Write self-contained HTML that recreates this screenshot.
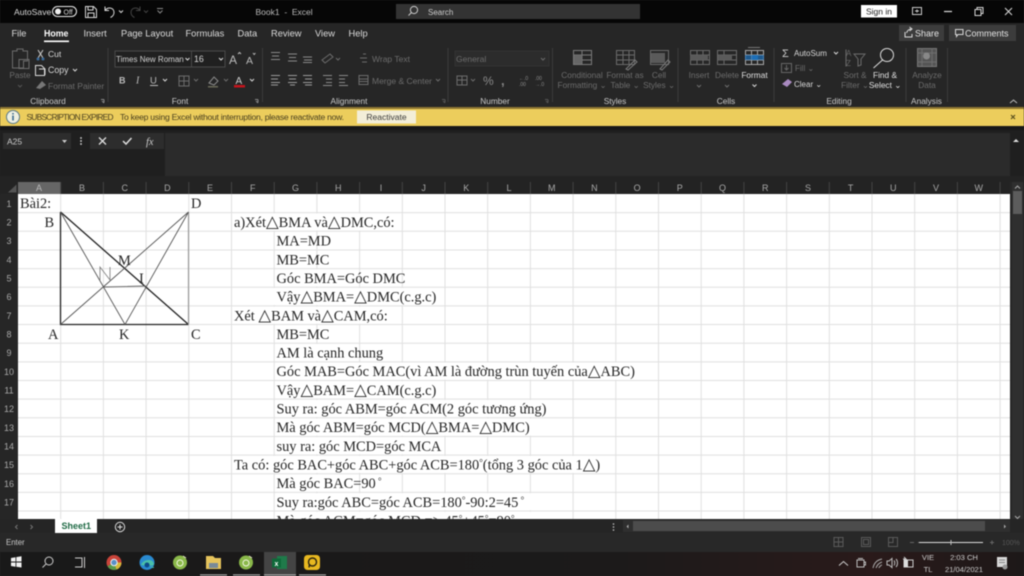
<!DOCTYPE html>
<html><head><meta charset="utf-8"><style>
html,body{margin:0;padding:0;background:#262626;width:1024px;height:576px;overflow:hidden}
svg{display:block;filter:blur(.45px)}
text{font-family:"Liberation Sans",sans-serif;font-size:9px;fill:#d8d8d8;white-space:pre}
.d{fill:#6c6c6c}
.t{font-size:9.3px;fill:#dcdcdc}
.g{font-size:8.3px;fill:#c8c8c8;text-anchor:middle}
.r{font-size:8.3px;fill:#6c6c6c;text-anchor:middle}
.w{font-size:8.3px;fill:#e0e0e0;text-anchor:middle}
.h{font-size:9px;fill:#a8a8a8;text-anchor:middle}
.s{font-family:"Liberation Serif",serif;font-size:14.4px;fill:#262626}
.tr{font-family:"DejaVu Sans",sans-serif;font-size:16.5px}
.y{font-size:8.6px;fill:#4a4020}
.ic{fill:none;stroke:#6c6c6c;stroke-width:1}
.iw{fill:none;stroke:#d8d8d8;stroke-width:1}
</style></head><body>
<svg width="1024" height="576" viewBox="0 0 1024 576" xmlns="http://www.w3.org/2000/svg">
<!-- title bar -->
<rect width="1024" height="23" fill="#060606"/>
<text x="14" y="15" style="font-size:8.6px">AutoSave</text>
<rect x="52.5" y="6.5" width="24" height="10" rx="5" fill="none" stroke="#eee"/>
<circle cx="58" cy="11.5" r="3" fill="#eee"/>
<text x="63.5" y="14.5" style="font-size:7px">Off</text>
<path class="iw" d="M85.500 6.500h8l3 3v8h-11zM88 6.500v3.500h5v-3.500M88 17.500v-4.500h6v4.500"/>
<path class="iw" d="M105 6.500v4h4M105 10.500c3-4 9-3 9 2 0 2-1.500 4-3.500 5"/>
<path class="iw" d="M119 10.500l2 2 2-2"/>
<path d="M140 6.500v4h-4M140 10.500c-3-4-9-3-9 2 0 2 1.500 4 3.500 5" fill="none" stroke="#444"/>
<path d="M144 10.500l2 2 2-2" fill="none" stroke="#444"/>
<path d="M157 8.500h6M157.500 10.500l2.500 2.500 2.500-2.500" fill="none" stroke="#888"/>
<text x="255.500" y="15" style="font-size:8.500px;fill:#bbb">Book1  -  Excel</text>
<rect x="396" y="4" width="244" height="15" fill="#333"/>
<circle cx="414" cy="10" r="3.600" fill="none" stroke="#ccc"/><path d="M411.500 12.500l-3 3" stroke="#ccc" fill="none"/>
<text x="428" y="15" style="font-size:8px;fill:#ccc">Search</text>
<rect x="861" y="5" width="36" height="12.500" fill="#fff"/>
<text x="879" y="14.500" style="font-size:8.500px;fill:#222;text-anchor:middle">Sign in</text>
<rect x="912.500" y="7.500" width="9" height="7" fill="none" stroke="#ccc"/><path d="M915 11h4M917 9.500v3" stroke="#ccc"/>
<path d="M944 11.500h8" stroke="#ddd" stroke-width="1.200"/>
<path class="iw" d="M975 9.500h6v6h-6zM977 9.500v-2h6v6h-2"/>
<path class="iw" d="M1005 8l7 7M1012 8l-7 7"/>
<!-- tabs -->
<rect y="23" width="1024" height="84" fill="#262626"/>
<text class="t" x="11.500" y="36.500">File</text>
<text class="t" x="44" y="36.500" style="fill:#fff;font-weight:bold;font-size:8.800px">Home</text>
<rect x="44" y="40.500" width="25" height="1.600" fill="#fff"/>
<text class="t" x="83.500" y="36.500">Insert</text>
<text class="t" x="121" y="36.500">Page Layout</text>
<text class="t" x="185.500" y="36.500">Formulas</text>
<text class="t" x="237.500" y="36.500">Data</text>
<text class="t" x="271" y="36.500">Review</text>
<text class="t" x="315" y="36.500">View</text>
<text class="t" x="348.500" y="36.500">Help</text>
<rect x="899" y="25" width="45" height="16" fill="#3c3c3c"/>
<path class="iw" d="M905 32v5h7v-3M906.500 33c1-3 3-4 5-4M909.500 27l2.500 2-2.500 2"/>
<text x="915" y="36.500" style="font-size:9px;fill:#e4e4e4">Share</text>
<rect x="949" y="25" width="67" height="16" fill="#3c3c3c"/>
<path class="iw" d="M955.500 29.500h7.500v5h-5l-1.500 2v-2h-1z"/>
<text x="965" y="36.500" style="font-size:9px;fill:#e4e4e4">Comments</text>
<!-- separators -->
<path d="M108 48v54M262.500 48v54M448 48v54M552.500 48v54M678 48v54M774 48v54M906 48v54M947.500 48v54" stroke="#3a3a3a"/>
<!-- clipboard -->
<path class="ic" d="M12.500 51h4.500v-2h6v2h4.500v10h-4v7h-11zM19 59.500h10v9h-10z"/>
<text class="r" x="20" y="78">Paste</text>
<path d="M18 85l2 2 2-2" stroke="#555" fill="none"/>
<path d="M38 50l5 8M43 50l-5 8" stroke="#ccc" fill="none"/><circle cx="38" cy="59" r="1.500" fill="#3a6a9a"/><circle cx="43" cy="59" r="1.500" fill="#3a6a9a"/>
<text x="48" y="57" style="font-size:8.500px">Cut</text>
<path class="iw" d="M35.500 65.500h6l3 3v7h-9zM39 69h6v6"/>
<text x="48" y="73" style="font-size:8.800px">Copy</text>
<path class="iw" d="M73 69l2 2 2-2"/>
<path d="M36 88l6-7 4 4-6 4z" fill="#777"/>
<text class="d" x="48" y="89" style="font-size:8.500px">Format Painter</text>
<text class="g" x="48" y="104">Clipboard</text>
<path d="M101 99.500h3M104 99.500v3M102 101l2 2" stroke="#888" fill="none"/>
<!-- font -->
<rect x="115" y="51" width="110" height="16" fill="#202020" stroke="#4a4a4a"/>
<path d="M191.500 51v16" stroke="#4a4a4a"/>
<text x="116" y="62" style="font-size:8px;fill:#d0d0d0">Times New Roman</text>
<path class="iw" d="M185.500 58l2 2 2-2M219 58l2 2 2-2"/>
<text x="194" y="62" style="font-size:8.800px">16</text>
<text x="229" y="64" style="font-size:12px;fill:#bbb">A</text><path d="M238 54l1.500-1.500 1.500 1.500" stroke="#bbb" fill="none"/>
<text x="246" y="64" style="font-size:10.500px;fill:#bbb">A</text><path d="M253 53l1.200 1.500 1.200-1.500" stroke="#bbb" fill="none"/>
<text x="119" y="83.500" style="font-size:9px;font-weight:bold;fill:#bbb">B</text>
<text x="136" y="83.500" style="font-family:'Liberation Serif';font-style:italic;font-size:10px;fill:#bbb">I</text>
<text x="150" y="83.500" style="font-size:9.500px;fill:#bbb">U</text><path d="M150 85.500h8" stroke="#bbb"/>
<path class="iw" d="M163 79l2 2 2-2"/>
<path class="ic" d="M179 76h10v10h-10zM184 76v10M179 81h10"/>
<path class="ic" d="M194 79l2 2 2-2"/>
<path d="M209 83l5-6 4 4-4 4z" fill="none" stroke="#8a8a8a"/><rect x="208" y="86" width="10" height="1.500" fill="#6a6a58"/>
<path class="ic" d="M224 79l2 2 2-2"/>
<text x="235.500" y="84" style="font-size:10px;fill:#ccc">A</text><rect x="234" y="85" width="11" height="2.500" fill="#c4141c"/>
<path class="iw" d="M250 79l2 2 2-2"/>
<text class="g" x="180" y="104">Font</text>
<path d="M255 99.500h3M258 99.500v3M256 101l2 2" stroke="#888" fill="none"/>
<!-- alignment -->
<path d="M271 52.500h9M272 56h7M271 59.500h9M288 54h9M289 57.500h7M288 61h9M303 57h9M304 60h8M303 62.500h9" stroke="#8a8a8a" fill="none"/>
<path class="ic" d="M322 60l8-6 3 3-8 6zM336 58l2 2 2-2"/><path class="ic" d="M363 54h3M360 58h7M362 62h5"/>
<text class="d" x="372" y="62" style="font-size:8.500px">Wrap Text</text>
<path d="M271 75.500h9M271 79h7M271 82.500h9M271 85h7M288 75.500h9M289 79h7M288 82.500h9M290 85h5M303 75.500h9M305 79h7M303 82.500h9M305 85h7" stroke="#9a9a9a" fill="none"/>
<path d="M323 75.500h9M326 79h6M326 82.500h6M323 85.500h9M339 75.500h9M339 79h6M339 82.500h6M339 85.500h9" stroke="#8a8a8a" fill="none"/>
<path class="ic" d="M359 75.500h9v9h-9zM359 79h9M359 81.500h9"/>
<text class="d" x="372" y="84" style="font-size:8.500px">Merge &amp; Center</text>
<path class="ic" d="M436 79l2 2 2-2"/>
<text class="g" x="349" y="104">Alignment</text>
<path d="M442 99.500h3M445 99.500v3M443 101l2 2" stroke="#555" fill="none"/>
<!-- number -->
<rect x="455" y="51" width="94" height="15" fill="#2c2c2c" stroke="#333"/>
<text class="d" x="456" y="62" style="font-size:8.500px">General</text>
<path class="ic" d="M541 58l2 2 2-2"/>
<path class="ic" d="M457 76h10v9h-10zM457 80h10M462 76v9"/><path class="ic" d="M471 79l2 2 2-2"/>
<text x="483" y="85" style="font-size:12px;fill:#8a8a8a">%</text>
<text x="501" y="85" style="font-size:13px;fill:#8a8a8a;font-weight:bold">,</text>
<text x="519" y="80" style="font-size:5px;fill:#8a8a8a">←.0</text><text x="519" y="86" style="font-size:5px;fill:#8a8a8a">.00</text>
<text x="535" y="80" style="font-size:5px;fill:#8a8a8a">.00</text><text x="535" y="86" style="font-size:5px;fill:#8a8a8a">→.0</text>
<text class="g" x="495" y="104">Number</text>
<path d="M545 99.500h3M548 99.500v3M546 101l2 2" stroke="#555" fill="none"/>
<!-- styles -->
<path d="M573.500 50.500h18v14h-18zM573.500 55h18M573.500 60h18M582 50.500v14" fill="none" stroke="#7a7a7a"/><rect x="574" y="55" width="8" height="9" fill="#666"/>
<text class="r" x="582" y="78">Conditional</text><text class="r" x="582" y="88">Formatting ⌄</text>
<path d="M616.500 50.500h18v14h-18zM616.500 55h18M616.500 60h18M623 50.500v14M629 50.500v14" fill="none" stroke="#6a6a6a"/><path d="M626 69l9-9 2 2-9 8z" fill="none" stroke="#7a7a7a"/>
<text class="r" x="625" y="78">Format as</text><text class="r" x="625" y="88">Table ⌄</text>
<path d="M650.500 50.500h18v14h-18z" fill="none" stroke="#6a6a6a"/><rect x="651" y="53" width="14" height="10" fill="#5a5a5a"/><path d="M660 69l8-9 2 2-8 8z" fill="none" stroke="#7a7a7a"/>
<text class="r" x="659" y="78">Cell</text><text class="r" x="659" y="88">Styles ⌄</text>
<text class="g" x="615" y="104">Styles</text>
<!-- cells -->
<path d="M690.500 50.500h19v14h-19zM690.500 55h19M690.500 60h19M697 50.500v14M703 50.500v14" fill="none" stroke="#6a6a6a"/><rect x="690" y="55" width="18" height="5" fill="#5a5a5a"/>
<text class="r" x="699" y="78">Insert</text><path class="ic" d="M697 85l2 2 2-2"/>
<path d="M717.500 50.500h19v14h-19zM717.500 55h19M717.500 60h19M724 50.500v14" fill="none" stroke="#6a6a6a"/><rect x="718" y="55" width="14" height="5" fill="#5a5a5a"/>
<text class="r" x="727" y="78">Delete</text><path class="ic" d="M725 85l2 2 2-2"/>
<path d="M745.500 50.500h18v14h-18zM745.500 55h18M745.500 60h18M751.500 50.500v14M757.500 50.500v14" fill="none" stroke="#a8a8a8"/><rect x="745" y="55" width="19" height="5" fill="#1d6fb8" opacity=".7"/><rect x="752" y="55" width="6" height="5" fill="#1d6fb8"/>
<path d="M748 47.500h12" stroke="#777"/>
<text class="w" x="754.500" y="78">Format</text><path class="iw" d="M752.500 84.500l2 2 2-2"/>
<text class="g" x="726" y="104">Cells</text>
<!-- editing -->
<text x="782" y="57" style="font-size:11px;fill:#ccc">Σ</text>
<text x="794" y="56" style="font-size:8px">AutoSum</text>
<path class="iw" d="M834 52l2 2 2-2"/>
<rect x="781.500" y="63.500" width="10" height="9" fill="none" stroke="#666"/><path d="M786.500 65v5M784.500 68l2 2 2-2" stroke="#666" fill="none"/>
<text class="d" x="795" y="71" style="font-size:8px">Fill ⌄</text>
<path d="M782 84l6-5 4 3-5 5z" fill="#a98ac0"/>
<text x="794" y="87" style="font-size:8px">Clear ⌄</text>
<text x="846" y="56" style="font-size:8px;fill:#666">A</text><text x="846" y="66" style="font-size:8px;fill:#666">Z</text>
<path d="M846 49.500v17M854 54h11l-4 5v6l-3 1v-7z" fill="none" stroke="#6c6c6c"/>
<text class="r" x="855" y="78">Sort &amp;</text><text class="r" x="855" y="88">Filter ⌄</text>
<circle cx="887" cy="55" r="6.500" fill="none" stroke="#ddd"/><path d="M882.500 60l-9 8" stroke="#ddd" fill="none"/>
<text class="w" x="885" y="78">Find &amp;</text><text class="w" x="885" y="88">Select ⌄</text>
<text class="g" x="839" y="104">Editing</text>
<!-- analysis -->
<rect x="917.500" y="48.500" width="19" height="18" fill="#555" stroke="#777"/><path d="M917 53h19M917 62h19M922 48v18M932 48v18" stroke="#6e6e6e"/><circle cx="926.500" cy="56" r="3.500" fill="#888"/>
<text class="r" x="927" y="78">Analyze</text><text class="r" x="927" y="88">Data</text>
<text class="g" x="926.500" y="104">Analysis</text>
<path d="M1010 103l3.500-3 3.500 3" stroke="#bbb" fill="none"/>
<!-- yellow bar -->
<rect y="107" width="1024" height="2" fill="#8d7632"/>
<rect y="109" width="1024" height="17" fill="#eccd5c"/>
<rect y="126" width="1024" height="4" fill="#171717"/>
<circle cx="13" cy="117" r="6.500" fill="#eef0e2" stroke="#5a7a8a"/>
<rect x="12.200" y="115.500" width="1.600" height="5" fill="#3a6a90"/><rect x="12.200" y="113" width="1.600" height="1.500" fill="#3a6a90"/>
<text class="y" x="26.500" y="120" style="font-size:8.400px;fill:#4a4020" textLength="87">SUBSCRIPTION EXPIRED</text>
<text class="y" x="120" y="120" textLength="224">To keep using Excel without interruption, please reactivate now.</text>
<rect x="357" y="110.500" width="59" height="13" fill="#f3eed8"/>
<text x="386.500" y="120" style="font-size:8.500px;fill:#3a3a3a;text-anchor:middle">Reactivate</text>
<path d="M1011 115l4 4M1015 115l-4 4" stroke="#5a5020" stroke-width="1.200"/>
<!-- formula bar -->
<rect y="130" width="1024" height="52" fill="#1f1f1f"/>
<rect x="3" y="133" width="68" height="16" fill="#2d2d2d"/>
<text x="7" y="144.500" style="font-size:8.500px;fill:#ccc">A25</text>
<path d="M62 140l2.500 3 2.500-3z" fill="#ccc"/>
<circle cx="81" cy="138" r=".9" fill="#ddd"/><circle cx="81" cy="141" r=".9" fill="#ddd"/><circle cx="81" cy="144" r=".9" fill="#ddd"/>
<rect x="90" y="133" width="74" height="16" fill="#2d2d2d"/>
<path d="M99 137.500l7 7M106 137.500l-7 7" stroke="#ddd" stroke-width="1.300" fill="none"/>
<path d="M123 141l3 3 5.500-6" stroke="#ddd" stroke-width="1.500" fill="none"/>
<text x="146" y="145" style="font-family:'Liberation Serif';font-style:italic;font-size:10.500px;fill:#ccc">fx</text>
<rect x="165" y="133" width="845" height="43" fill="#2b2b2b"/>
<path d="M1013 142l3-3 3 3z" fill="#ddd"/>
<!-- headers -->
<rect y="176" width="1024" height="18" fill="#232323"/>
<rect y="194" width="18" height="325" fill="#262626"/>
<path d="M8 192.500h8.500v-8z" fill="#555"/>
<rect x="18" y="182" width="42.500" height="12" fill="#666"/>
<path d="M60.700 182v12M103.400 182v12M146.100 182v12M188.800 182v12M231.500 182v12M274.200 182v12M316.900 182v12M359.600 182v12M402.300 182v12M445 182v12M487.700 182v12M530.400 182v12M573.100 182v12M615.800 182v12M658.500 182v12M701.200 182v12M743.900 182v12M786.600 182v12M829.300 182v12M872 182v12M914.700 182v12M957.400 182v12M1000.100 182v12" stroke="#444"/>
<text class="h" x="39" y="191" style="fill:#bbb">A</text><text class="h" x="82" y="191">B</text><text class="h" x="124.700" y="191">C</text><text class="h" x="167.400" y="191">D</text><text class="h" x="210" y="191">E</text><text class="h" x="252.800" y="191">F</text><text class="h" x="295.500" y="191">G</text><text class="h" x="338.200" y="191">H</text><text class="h" x="381" y="191">I</text><text class="h" x="423.600" y="191">J</text><text class="h" x="466.300" y="191">K</text><text class="h" x="509" y="191">L</text><text class="h" x="551.700" y="191">M</text><text class="h" x="594.400" y="191">N</text><text class="h" x="637.100" y="191">O</text><text class="h" x="679.800" y="191">P</text><text class="h" x="722.500" y="191">Q</text><text class="h" x="765.200" y="191">R</text><text class="h" x="808" y="191">S</text><text class="h" x="850.600" y="191">T</text><text class="h" x="893.300" y="191">U</text><text class="h" x="936" y="191">V</text><text class="h" x="978.700" y="191">W</text>
<text class="h" x="9" y="207">1</text><text class="h" x="9" y="225.500">2</text><text class="h" x="9" y="244">3</text><text class="h" x="9" y="262.800">4</text><text class="h" x="9" y="281.500">5</text><text class="h" x="9" y="300">6</text><text class="h" x="9" y="318.800">7</text><text class="h" x="9" y="337.500">8</text><text class="h" x="9" y="356">9</text><text class="h" x="9" y="374.800">10</text><text class="h" x="9" y="393.500">11</text><text class="h" x="9" y="412">12</text><text class="h" x="9" y="430.800">13</text><text class="h" x="9" y="449.500">14</text><text class="h" x="9" y="468">15</text><text class="h" x="9" y="486.800">16</text><text class="h" x="9" y="505.500">17</text>
<!-- sheet -->
<rect x="18" y="194" width="992" height="325" fill="#fff"/>
<path d="M60.700 194v325M103.400 194v325M146.100 194v325M188.800 194v325M231.500 194v325M274.200 194v325M316.900 194v325M359.600 194v325M402.300 194v325M445 194v325M487.700 194v325M530.400 194v325M573.100 194v325M615.800 194v325M658.500 194v325M701.200 194v325M743.900 194v325M786.600 194v325M829.300 194v325M872 194v325M914.700 194v325M957.400 194v325M1000.100 194v325" stroke="#e0e0e0"/>
<!-- text overflow masks -->
<g fill="#fff">
<rect x="233" y="213.500" width="168" height="17"/>
<rect x="276" y="232" width="40" height="17"/>
<rect x="276" y="250.700" width="40" height="17"/>
<rect x="276" y="269.400" width="83" height="17"/>
<rect x="233" y="288" width="210" height="17"/>
<rect x="233" y="306.700" width="168" height="17"/>
<rect x="276" y="325.300" width="40" height="17"/>
<rect x="276" y="344" width="83" height="17"/>
<rect x="276" y="362.600" width="382" height="17"/>
<rect x="276" y="381.300" width="168" height="17"/>
<rect x="276" y="400" width="274" height="17"/>
<rect x="276" y="418.600" width="274" height="17"/>
<rect x="276" y="437.200" width="168" height="17"/>
<rect x="233" y="455.900" width="382" height="17"/>
<rect x="276" y="474.500" width="83" height="17"/>
<rect x="276" y="493.200" width="274" height="17"/>
<rect x="276" y="511.800" width="274" height="8"/>
</g>
<path d="M18 212.650h992M18 231.300h992M18 249.950h992M18 268.600h992M18 287.250h992M18 305.900h992M18 324.550h992M18 343.200h992M18 361.850h992M18 380.500h992M18 399.150h992M18 417.800h992M18 436.450h992M18 455.100h992M18 473.750h992M18 492.400h992M18 511.050h992" stroke="#e0e0e0"/>
<!-- figure -->
<rect x="19" y="195" width="41" height="17" fill="#fff"/>
<g fill="none">
<path d="M60.500 212v112.500H188.500M60.500 212L188.500 324.500" stroke="#222" stroke-width="1.300"/>
<path d="M188.500 212v112.500" stroke="#999" stroke-width="1.200"/>
<path d="M60.500 324.500L188.500 212M60.500 212L125 324.500L188.500 212" stroke="#555" stroke-width=".9"/>
<path d="M104 287L146 286" stroke="#666" stroke-width=".9"/>
<path d="M100 280V267L110 280V267" stroke="#777" stroke-width=".8"/>
</g>
<text class="s" x="20" y="208">Bài2:</text>
<text class="s" x="191" y="208">D</text>
<text class="s" x="44.500" y="227">B</text>
<text class="s" x="118" y="265">M</text>
<text class="s" x="139" y="283">I</text>
<text class="s" x="48" y="339">A</text>
<text class="s" x="119" y="339">K</text>
<text class="s" x="191" y="339">C</text>
<!-- cell text -->
<text class="s" x="234" y="227">a)Xét<tspan class="tr">△</tspan>BMA và<tspan class="tr">△</tspan>DMC,có:</text>
<text class="s" x="276.500" y="245.700">MA=MD</text>
<text class="s" x="276.500" y="264.300">MB=MC</text>
<text class="s" x="276.500" y="283">Góc BMA=Góc DMC</text>
<text class="s" x="276.500" y="301.600">Vậy<tspan class="tr">△</tspan>BMA=<tspan class="tr">△</tspan>DMC(c.g.c)</text>
<text class="s" x="234" y="320.300">Xét <tspan class="tr">△</tspan>BAM và<tspan class="tr">△</tspan>CAM,có:</text>
<text class="s" x="276.500" y="339">MB=MC</text>
<text class="s" x="276.500" y="357.600">AM là cạnh chung</text>
<text class="s" x="276.500" y="376.200">Góc MAB=Góc MAC(vì AM là đường trùn tuyến của<tspan class="tr">△</tspan>ABC)</text>
<text class="s" x="276.500" y="395">Vậy<tspan class="tr">△</tspan>BAM=<tspan class="tr">△</tspan>CAM(c.g.c)</text>
<text class="s" x="276.500" y="413.600">Suy ra: góc ABM=góc ACM(2 góc tương ứng)</text>
<text class="s" x="276.500" y="432.200">Mà góc ABM=góc MCD(<tspan class="tr">△</tspan>BMA=<tspan class="tr">△</tspan>DMC)</text>
<text class="s" x="276.500" y="451">suy ra: góc MCD=góc MCA</text>
<text class="s" x="234" y="469.500">Ta có: góc BAC+góc ABC+góc ACB=180<tspan style="font-size:9px" dy="-4">°</tspan><tspan dy="4">(tổng 3 góc của 1</tspan><tspan class="tr">△</tspan>)</text>
<text class="s" x="276.500" y="488">Mà góc BAC=90<tspan style="font-size:9px" dy="-4"> °</tspan></text>
<text class="s" x="276.500" y="506.800">Suy ra:góc ABC=góc ACB=180<tspan style="font-size:9px" dy="-4">°</tspan><tspan dy="4">-90:2=45</tspan><tspan style="font-size:9px" dy="-4"> °</tspan></text>
<text class="s" x="276.500" y="525.500">Mà góc ACM=góc MCD =&gt; 45<tspan style="font-size:9px" dy="-4">°</tspan><tspan dy="4">+45</tspan><tspan style="font-size:9px" dy="-4">°</tspan><tspan dy="4">=90</tspan><tspan style="font-size:9px" dy="-4">°</tspan></text>
<!-- right scrollbar -->
<rect x="1010" y="182" width="14" height="337" fill="#262626"/>
<rect x="1012" y="182" width="11" height="337" fill="#2f2f2f"/>
<path d="M1015 188.500l2.500-2.500 2.500 2.500" stroke="#aaa" fill="none"/>
<rect x="1013" y="191" width="9" height="23" fill="#5c5c5c"/>
<path d="M1015 516l2.500 2.500 2.500-2.500" stroke="#aaa" fill="none"/>
<!-- sheet tabs -->
<rect y="519" width="1024" height="14" fill="#252525"/>
<path d="M17.500 525l-2 2 2 2" fill="none" stroke="#777"/><path d="M30.500 525l2 2-2 2" fill="none" stroke="#777"/>
<rect x="55" y="519" width="42" height="14" fill="#fff"/>
<text x="61.500" y="529" style="font-size:9px;font-weight:bold;fill:#1f6a45">Sheet1</text>
<circle cx="120" cy="527" r="4.700" fill="none" stroke="#ddd"/><path d="M117.500 527h5M120 524.500v5" stroke="#ddd"/>
<circle cx="613.500" cy="524" r=".8" fill="#ccc"/><circle cx="613.500" cy="527" r=".8" fill="#ccc"/><circle cx="613.500" cy="530" r=".8" fill="#ccc"/>
<rect x="623" y="520" width="387" height="12" fill="#2f2f2f"/>
<rect x="633" y="521" width="352" height="10" fill="#4c4c4c"/>
<path d="M628.500 524.500l-2 2 2 2z" fill="#aaa"/><path d="M1004 524.500l2 2-2 2z" fill="#aaa"/>
<!-- status -->
<rect y="533" width="1024" height="19" fill="#282828"/>
<text x="6" y="545" style="font-size:7.800px;fill:#c8c8c8">Enter</text>
<path class="ic" d="M834 537.500h9v9h-9zM834 542h9M838.500 537.500v9M861.500 537.500h9v9h-9zM863.500 539.500h5v5h-5zM888.500 537.500h9v9h-9zM893 537.500v5h-4.500" style="stroke:#5a5a5a"/>
<path d="M910 542.500h4M918 542.500h65M990 542.500h4M992 540.500v4" stroke="#666"/><path d="M919 542.500h64" stroke="#ddd"/><path d="M951 540v5" stroke="#bbb"/>
<text x="1002" y="545" style="font-size:7px;fill:#555">100%</text>
<!-- taskbar -->
<defs><linearGradient id="tb" x1="0" x2="1" y1="0" y2="0"><stop offset="0" stop-color="#191919"/><stop offset=".6" stop-color="#1c1a1a"/><stop offset=".85" stop-color="#2a1a1a"/><stop offset="1" stop-color="#1d1818"/></linearGradient></defs>
<rect y="552" width="1024" height="24" fill="url(#tb)"/>
<rect x="264" y="552" width="32" height="24" fill="#444"/>
<path d="M11 558l4.500-.7v4.200h-4.500zM16.300 557.100l5.200-.8v5.200h-5.200zM11 562.500h4.500v4.200l-4.500-.7zM16.300 562.500h5.200v5l-5.200-.8z" fill="#f2f2f2"/>
<circle cx="49" cy="561" r="4" fill="none" stroke="#ccc"/><path d="M46 564l-3.500 3.500" stroke="#ccc"/>
<path d="M75 558h7v9h-7M84.500 557v11" stroke="#ccc" fill="none"/>
<circle cx="114" cy="562.500" r="7.500" fill="#c9443a"/><path d="M114 562.500l6.500 3.700a7.500 7.500 0 0 1-13 0z" fill="#5a9a4a"/><path d="M114 562.500h7.500a7.500 7.500 0 0 1-5 7z" fill="#d8b83a"/><circle cx="114" cy="562.500" r="3.200" fill="#5a90c8" stroke="#eee"/>
<circle cx="147" cy="562.500" r="7.500" fill="#2a8ad0"/><path d="M141 565c2-6 12-7 13-1 0 2-4 2-5 1 2 4 6 3 5 2" fill="#4ac0a8"/><circle cx="147" cy="565" r="2.500" fill="#0d4a88"/>
<circle cx="180" cy="562.500" r="7" fill="#8ab84a"/><circle cx="180" cy="563" r="3" fill="none" stroke="#f0f4e0"/><path d="M183 556l3 2" stroke="#e8e8c8"/>
<path d="M206 556h7l2 2h6v11h-15z" fill="#e6c45c"/><rect x="209" y="563" width="9" height="5" fill="#7a8a98"/>
<circle cx="246" cy="562.500" r="7" fill="#8ab84a"/><circle cx="246" cy="563" r="3" fill="none" stroke="#f0f4e0"/><path d="M249 556l3 2" stroke="#e8e8c8"/>
<rect x="277" y="556" width="10" height="13" fill="#1f7a4a"/><rect x="272" y="558.500" width="9" height="9" fill="#0f6a3a"/>
<text x="274.500" y="566" style="font-size:7px;font-weight:bold;fill:#fff">x</text>
<rect x="304" y="555" width="16" height="15" rx="3.500" fill="#e8b820"/>
<circle cx="312.500" cy="562" r="4" fill="none" stroke="#2a2410" stroke-width="1.400"/><path d="M309.500 564l-.5 3.500" stroke="#2a2410" stroke-width="1.400"/>
<path d="M200 575h27M233 575h27M264 575h32M299 575h27" stroke="#a8a8a8" stroke-width="1.300"/>
<!-- tray -->
<path d="M839 565.500l4.500-4 4.500 4" fill="none" stroke="#ccc"/>
<path class="iw" d="M857 560h7v7h-7zM858 558.500h5M864 562h1.500v3h-1.500" style="stroke:#bbb"/>
<path d="M873 568c1-5 4-8 9-9M876 568c1-3 3-5 6-6M879 568c0-1 2-3 3-3" fill="none" stroke="#aaa"/>
<path d="M887 561h2l3-2.500v9l-3-2.500h-2zM894 560.500c1 1 1 4 0 5M896 559c2 2 2 6 0 8" fill="none" stroke="#bbb"/>
<rect x="904" y="560" width="9" height="7" fill="none" stroke="#ccc"/><rect x="904" y="560" width="4" height="7" fill="#ddd"/><path d="M904 557l2 2h-3" stroke="#ccc" fill="none"/>
<text x="928" y="560" style="font-size:7.600px;fill:#ccc;text-anchor:middle">VIE</text>
<text x="928" y="572" style="font-size:7.600px;fill:#ccc;text-anchor:middle">TL</text>
<text x="964" y="560" style="font-size:7.600px;fill:#ccc;text-anchor:middle">2:03 CH</text>
<text x="964" y="572" style="font-size:7.600px;fill:#ccc;text-anchor:middle">21/04/2021</text>
<rect x="997" y="557" width="10" height="10" fill="#d8d8d8"/><path d="M999 560h6M999 562.500h6" stroke="#888"/><circle cx="1005" cy="567" r="2.500" fill="#999"/>
</svg>
</body></html>
